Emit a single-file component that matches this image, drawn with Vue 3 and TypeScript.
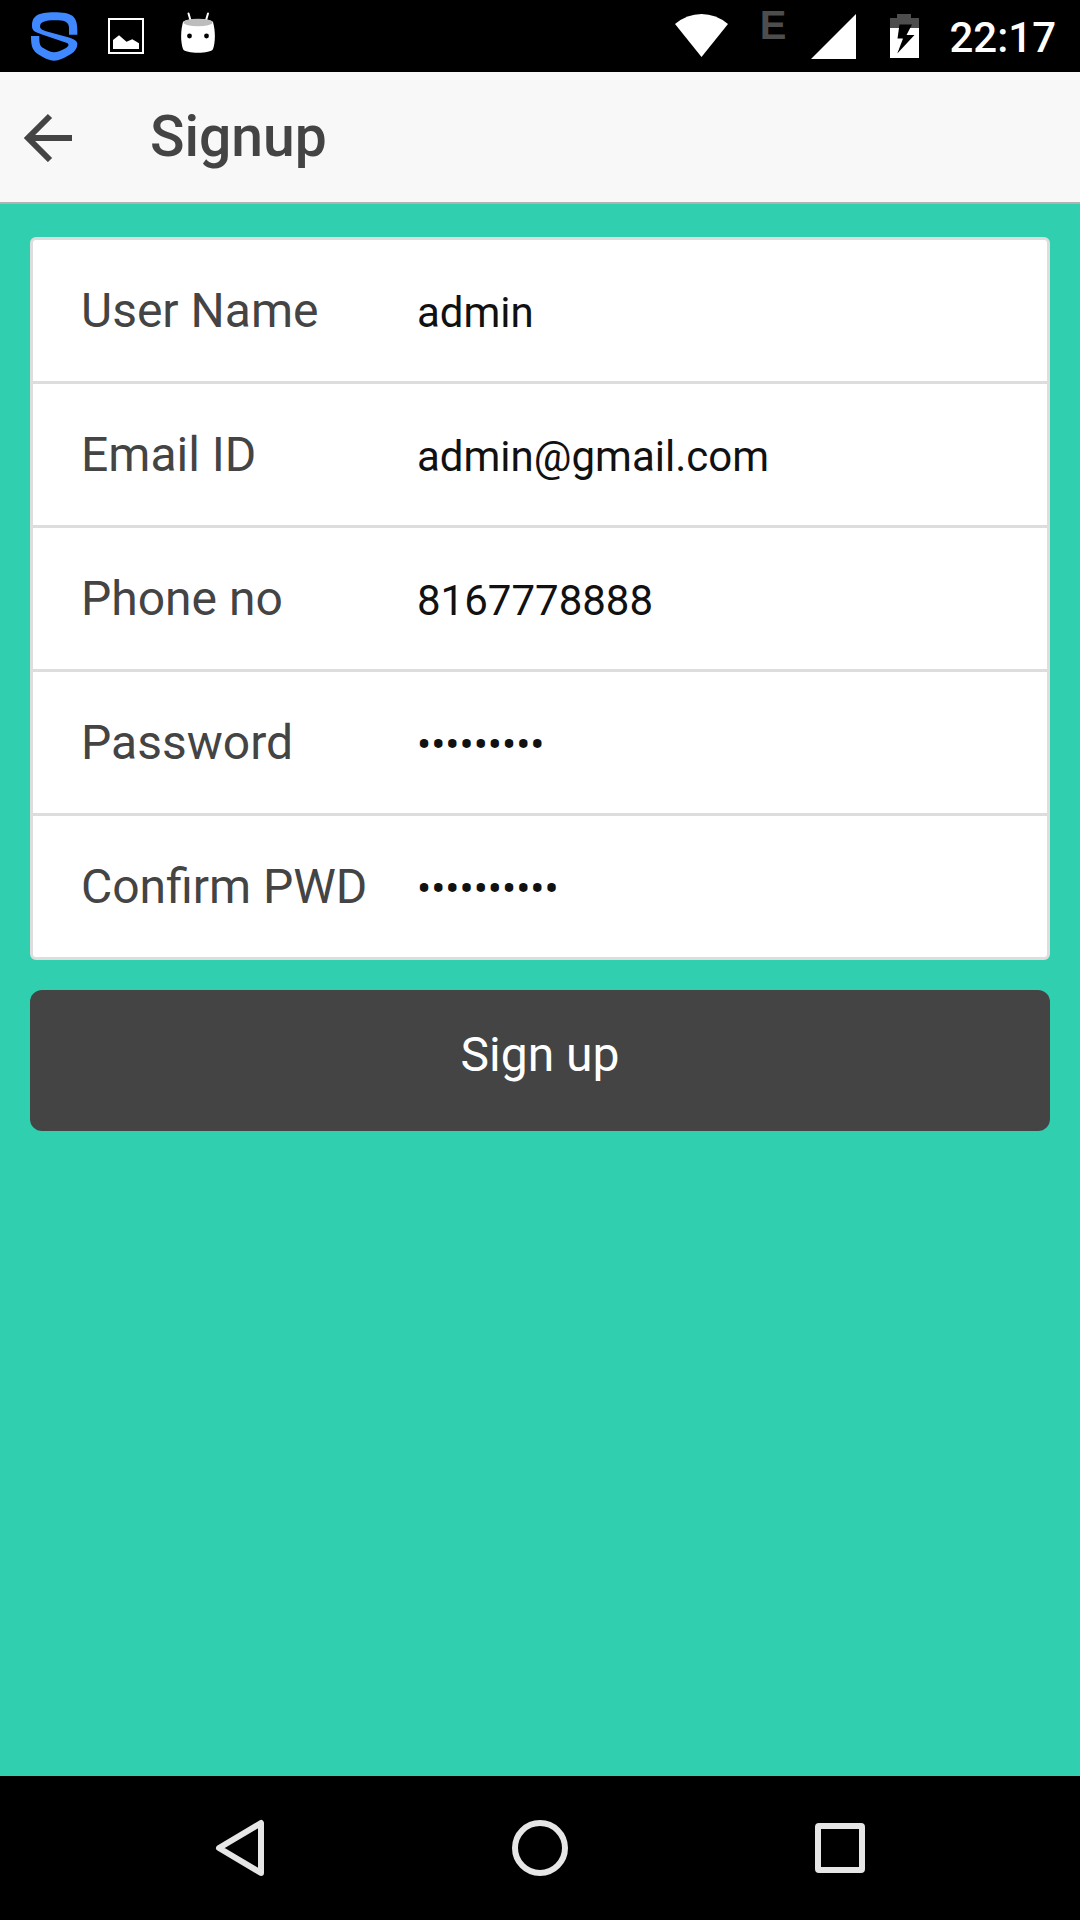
<script setup lang="ts">
import { ref } from 'vue'

interface Field {
  id: string
  label: string
  type: string
  value: string
}

const fields = ref<Field[]>([
  { id: 'username', label: 'User Name', type: 'text', value: 'admin' },
  { id: 'email', label: 'Email ID', type: 'email', value: 'admin@gmail.com' },
  { id: 'phone', label: 'Phone no', type: 'tel', value: '8167778888' },
  { id: 'password', label: 'Password', type: 'password', value: 'admin1234' },
  { id: 'confirm', label: 'Confirm PWD', type: 'password', value: 'admin12345' },
])
</script>

<template>
  <div class="screen">
    <div class="status">
      <div class="notices">
        <svg class="shield" width="48" height="72" viewBox="31 0 48 72" aria-hidden="true">
          <path
            d="M77.300 34.700H69V28C69 22 65 20.300 55 20.300C45 20.300 40 22 40 26.500C40 29 42 30 46 31.300L69 37.500C75 39.500 77.300 41 77.300 44C77.300 48 75 51.500 71 54C65 57.500 59 60.700 54 60.700C49 60.700 42 57 37 53.500C32 49.500 31 45 31 36H39.300C39.300 45 40 46.500 45 49C48 50.500 51 52.300 54 52.300C57 52.300 61 50.500 65 48.500C68 47 70 44.500 67 43L42 34.500C35 32 32 31 32 26C32 16 38 12.300 54 12.300C72 12.300 77.300 16 77.300 30Z"
            fill="#3f88ff"
          />
        </svg>
        <svg width="36" height="72" viewBox="108 0 36 72" aria-hidden="true">
          <path d="M109 19H143V53H109Z" fill="none" stroke="#fff" stroke-width="2" />
          <path d="M113 49V40L119 35.300L126.500 41.700L132.300 39.300L139 43.300V49Z" fill="#fff" />
        </svg>
        <svg width="36" height="72" viewBox="180 0 36 72" aria-hidden="true">
          <path d="M188.500 13.500L191 22M208 13.500L205.500 22" stroke="#fff" stroke-width="2" stroke-linecap="round" />
          <path d="M183 22C186 18 210 18 213 22C215.500 31 215.500 42 213 49C211 54 185 54 183 49C180.500 42 180.500 31 183 22Z" fill="#fff" />
          <ellipse cx="198" cy="22.500" rx="14.500" ry="3.800" fill="#bdbdbd" />
          <circle cx="189.500" cy="36" r="2.400" fill="#000" />
          <circle cx="206.500" cy="36" r="2.400" fill="#000" />
        </svg>
      </div>
      <div class="system">
        <svg width="54" height="72" viewBox="674 0 54 72" aria-hidden="true">
          <path d="M674 24Q686 14 700.500 14T727 24L700.500 57Z" fill="#fff" />
        </svg>
        <span class="network">E</span>
        <svg class="signal" width="46" height="72" viewBox="811 0 46 72" aria-hidden="true">
          <path d="M811 59L856 14V59Z" fill="#fff" />
        </svg>
        <svg class="battery" width="30" height="72" viewBox="890 0 30 72" aria-hidden="true">
          <path d="M890 18H897V14H911V18H919V28H890Z" fill="#4d4d4d" />
          <path d="M890 28H919V58H890Z" fill="#fff" />
          <path d="M899.500 24.500H912L906.500 35H914.500L897.300 53.500L903 38.500H897.500Z" fill="#000" />
        </svg>
        <time class="clock">22:17</time>
      </div>
    </div>

    <header class="bar">
      <button class="back" type="button" aria-label="Back">
        <svg width="48" height="50" viewBox="0 0 48 50" aria-hidden="true">
          <path d="M26 4L4 26L26 48M4 26H48" fill="none" stroke="#444" stroke-width="6" />
        </svg>
      </button>
      <h1 class="title">Signup</h1>
    </header>

    <main class="content">
      <form @submit.prevent>
        <div class="card">
          <div v-for="field in fields" :key="field.id" class="row">
            <label class="label" :for="field.id">{{ field.label }}</label>
            <input :id="field.id" v-model="field.value" class="input" :type="field.type" autocomplete="off" />
          </div>
        </div>
        <button class="submit" type="submit">Sign up</button>
      </form>
    </main>

    <nav class="nav">
      <button type="button" aria-label="Back">
        <svg width="60" height="60" viewBox="0 0 60 60" aria-hidden="true">
          <path d="M51 5V55L9 30Z" />
        </svg>
      </button>
      <button type="button" aria-label="Home">
        <svg width="60" height="60" viewBox="0 0 60 60" aria-hidden="true">
          <circle cx="30" cy="30" r="25" />
        </svg>
      </button>
      <button type="button" aria-label="Recent apps">
        <svg width="60" height="60" viewBox="0 0 60 60" aria-hidden="true">
          <rect x="8" y="8" width="44" height="44" rx="1" />
        </svg>
      </button>
    </nav>
  </div>
</template>

<style>
body {
  margin: 0;
}
</style>

<style scoped>
.screen {
  display: flex;
  flex-direction: column;
  min-height: 100vh;
  background: #30cfb0;
  color: #444;
  font-family: Roboto, "Noto Sans", sans-serif;
}

.screen button {
  margin: 0;
  padding: 0;
  border: 0;
  background: none;
  font-family: inherit;
}

svg {
  display: block;
  flex: none;
}

.status {
  display: flex;
  justify-content: space-between;
  height: 72px;
  padding: 0 24px 0 31px;
  background: #000;
  color: #fff;
}

.notices,
.system {
  display: flex;
}

.notices {
  gap: 36px;
}

.shield {
  margin-right: -7px;
}

.network {
  margin-left: 31px;
  color: #4d4d4d;
  font-family: "Liberation Sans", Arial, sans-serif;
  font-size: 40px;
  font-weight: 700;
  line-height: 50px;
}

.signal {
  margin-left: 25px;
}

.battery {
  margin-left: 33px;
}

.clock {
  margin-left: 29px;
  font-size: 42px;
  font-weight: 500;
  line-height: 75px;
}

.bar {
  display: flex;
  align-items: center;
  gap: 78px;
  height: 130px;
  padding: 0 24px;
  border-bottom: 2px solid #b2b2b2;
  background: #f8f8f8;
}

.title {
  margin: 0;
  font-size: 57px;
  font-weight: 500;
  line-height: 72px;
}

.content {
  flex: 1;
  padding: 33px 30px;
}

.card {
  border: 3px solid #ddd;
  border-radius: 6px;
  background: #fff;
}

.row {
  display: flex;
  align-items: baseline;
  padding: 0 48px;
  line-height: 141px;
}

.row + .row {
  border-top: 3px solid #ddd;
}

.label {
  width: 336px;
  font-size: 48px;
}

.input {
  flex: 1;
  min-width: 0;
  height: 60px;
  padding: 0;
  border: 0;
  outline: 0;
  background: transparent;
  color: #111;
  font-family: inherit;
  font-size: 42px;
}

.screen .submit {
  display: block;
  width: 100%;
  margin-top: 30px;
  padding-bottom: 12px;
  border-radius: 12px;
  background: #444;
  color: #fff;
  font-size: 48px;
  line-height: 129px;
}

.nav {
  display: flex;
  justify-content: center;
  align-items: center;
  gap: 240px;
  height: 144px;
  background: #000;
}

.nav svg {
  fill: none;
  stroke: #e6e6e6;
  stroke-width: 6px;
  stroke-linejoin: round;
}
</style>
